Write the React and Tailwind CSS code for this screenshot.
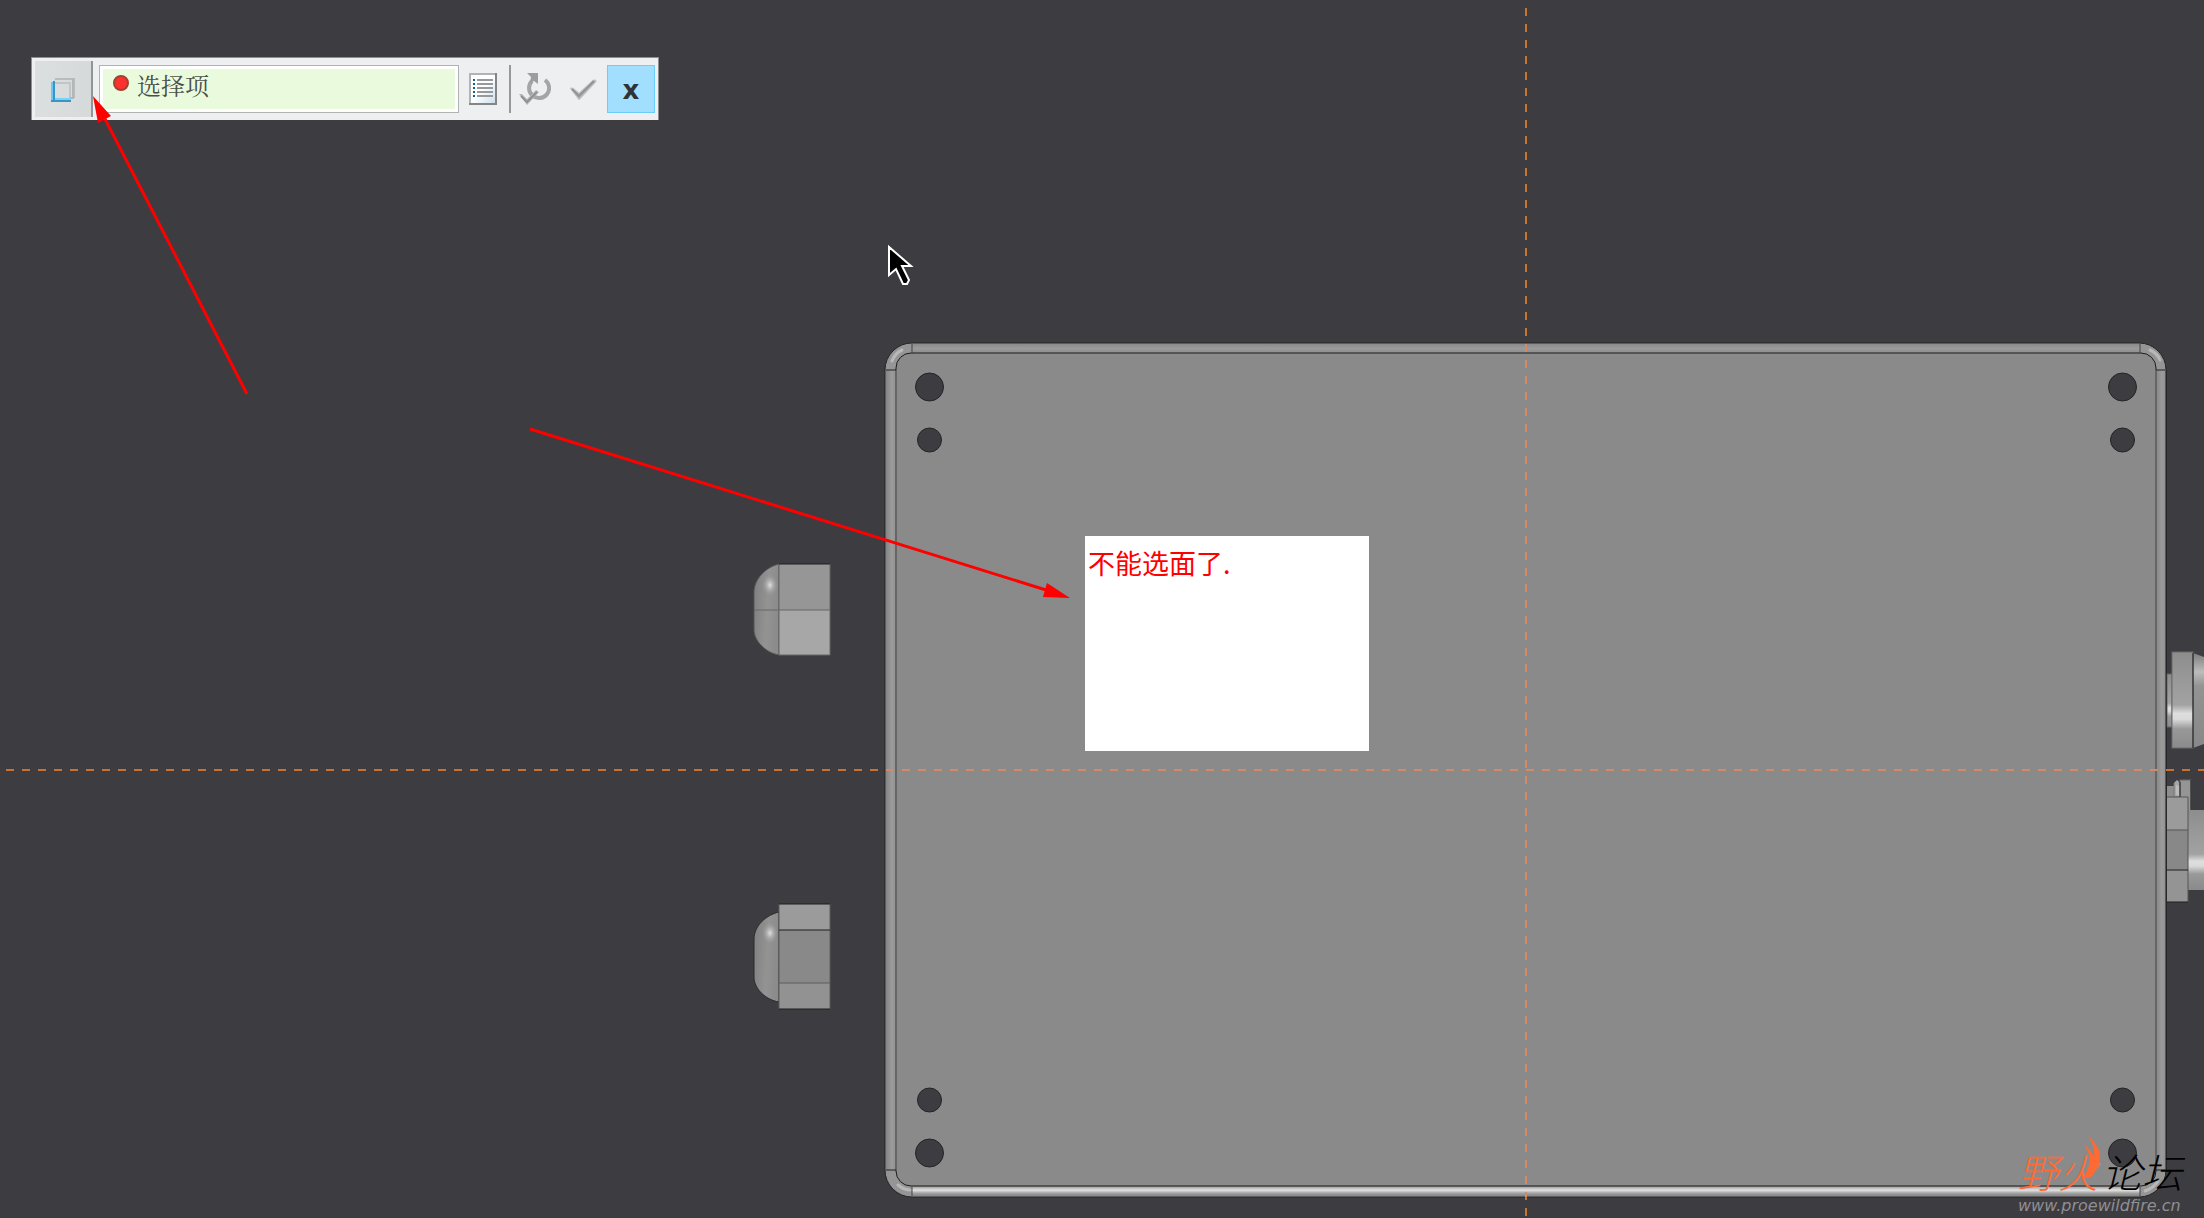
import React from 'react';

const HOLES = [
  { y: 387, r: 14 },
  { y: 440, r: 12 },
  { y: 1100, r: 12 },
  { y: 1153, r: 14 },
];

function CubeIcon() {
  return (
    <svg width="24" height="24" viewBox="0 0 24 24" fill="none" aria-hidden="true">
      <path d="M4 1H23V20" stroke="#b9bbbc" strokeWidth="2" />
      <path d="M4 5H19V20" stroke="#c2c4c5" strokeWidth="2" />
      <path d="M22 1V20H19" stroke="#b4b6b7" strokeWidth="2" />
      <path d="M1 4V22" stroke="#6fc6ee" strokeWidth="2" />
      <path d="M4 21H20" stroke="#7fd0f5" strokeWidth="2" />
      <path d="M3 3V23M0 23H20" stroke="#3596c8" strokeWidth="2" />
    </svg>
  );
}

function ListIcon() {
  return (
    <svg width="28" height="32" viewBox="0 0 28 32" aria-hidden="true">
      <defs>
        <linearGradient id="sheet" x1="0" y1="0" x2="1" y2="1">
          <stop offset="0.5" stopColor="#fff" />
          <stop offset="1" stopColor="#c9dcea" />
        </linearGradient>
      </defs>
      <path d="M1 1H27V31H1Z" fill="url(#sheet)" stroke="#b2b3b4" strokeWidth="2" />
      <path d="M27 0V31H0" fill="none" stroke="#838587" strokeWidth="2" />
      {[6, 10, 14, 18, 22].map((y) => (
        <g key={y}>
          <rect x="4" y={y} width="2" height="2" fill="#135f86" />
          <rect x="8" y={y} width="16" height="2" fill="#98999a" />
        </g>
      ))}
    </svg>
  );
}

function RepeatIcon() {
  return (
    <svg width="32" height="32" viewBox="0 0 32 32" fill="none" aria-hidden="true">
      <path d="M13 8A10 10 0 1 0 26 7" stroke="#a3a5a7" strokeWidth="4" />
      <path d="M8 0H19V11L15 8L11 10L12 4Z" fill="#9b9d9f" />
      <path d="M0 21L3 21L8 26L17 17L20 19L8 32Z" fill="#b4b6b8" />
      <path d="M2 23L8 29L18 19" stroke="#8f9193" strokeWidth="2" />
    </svg>
  );
}

function CheckIcon() {
  return (
    <svg width="28" height="22" viewBox="0 0 28 22" fill="none" aria-hidden="true">
      <path d="M1 9H4L10 14L24 1H27V3L10 21Z" fill="#b4b6b8" stroke="#cbcccd" />
      <path d="M3 10L10 17L25 2" stroke="#929496" strokeWidth="2" />
    </svg>
  );
}

function Toolbar() {
  return (
    <div
      role="toolbar"
      className="relative z-10 flex h-[63px] w-[628px] items-center border border-b-0 border-[#8d8e90] bg-[#eeeff1] pl-[3px] pr-[3px]"
    >
      <button
        type="button"
        aria-label="Surface"
        className="flex h-14 w-[58px] items-center justify-center border-r-2 border-[#929597] bg-gradient-to-r from-[#dbdfe0] to-[#d7dadb] pt-0.5"
      >
        <CubeIcon />
      </button>
      <div className="ml-1.5 flex h-12 w-[360px] shrink-0 border border-[#b1b2b4] bg-white p-[3px]">
        <div className="flex flex-1 items-start bg-[#eafbdd] pl-2.5">
          <span className="mt-1.5 size-4 shrink-0 rounded-full border-2 border-[#a3402f] bg-[#fd3030]" />
          <input
            aria-label="Collector"
            readOnly
            value="选择项"
            className="ml-2 h-8 min-w-0 flex-1 bg-transparent font-['Noto_Serif_CJK_SC','Noto_Sans_CJK_SC',serif] text-2xl leading-8 text-[#4a4f4a] outline-none"
          />
        </div>
      </div>
      <button type="button" aria-label="Details" className="ml-2.5">
        <ListIcon />
      </button>
      <span className="ml-3 h-12 w-0.5 bg-[#96989b]" />
      <button type="button" aria-label="Repeat" className="ml-2">
        <RepeatIcon />
      </button>
      <button type="button" aria-label="OK" className="ml-[18px] pt-0.5">
        <CheckIcon />
      </button>
      <button
        type="button"
        className="ml-auto size-12 border border-[#6cccfb] bg-[#a2dfff] pt-0.5 font-['DejaVu_Sans',sans-serif] text-[26px] leading-none font-bold text-[#303335]"
      >
        x
      </button>
    </div>
  );
}

function Plate() {
  return (
    <g>
      <rect x="885" y="343" width="1281" height="854" rx="27" fill="#959595" stroke="#252527" />
      <rect x="886" y="370" width="10" height="800" fill="url(#rimV)" />
      <rect x="2156" y="370" width="10" height="800" fill="url(#rimV)" />
      <rect x="912" y="344" width="1228" height="9" fill="url(#rimTop)" />
      <rect x="912" y="1187" width="1228" height="9" fill="url(#rimBottom)" />
      <rect x="896" y="353" width="1260" height="833" rx="15" fill="#8a8a8a" stroke="#1c1c1d" />
      <path d="M896 370V1170M2156 370V1170" stroke="#666" strokeWidth="2" />
      <path d="M912 344V353M2140 344V353M912 1187V1196M2140 1187V1196" stroke="#444" />
      <path d="M886 370H896M2156 370H2165M886 1170H896M2156 1170H2165" stroke="#222" />
      <g stroke="#d0d0d0" strokeWidth="3" strokeLinecap="round" fill="none" opacity="0.6">
        <path d="M892 361Q895 353 902 350" />
        <path d="M2150 350Q2157 353 2160 360" />
        <path d="M2145 1191Q2154 1188 2158 1181" />
        <path d="M898 1185Q904 1190 910 1190" />
      </g>
      {HOLES.map((hole) => (
        <g key={hole.y} fill="#3d3c41" stroke="#242426">
          <circle cx="929.5" cy={hole.y} r={hole.r} />
          <circle cx="2122.5" cy={hole.y} r={hole.r} />
        </g>
      ))}
    </g>
  );
}

function LeftNuts() {
  return (
    <g>
      <path d="M779 564C766 567 754 579 754 592V630C754 641 766 653 779 655Z" fill="url(#dome)" stroke="#555" />
      <ellipse cx="770" cy="585" rx="8" ry="11" fill="url(#shine)" />
      <rect x="779" y="564" width="51" height="46" fill="#969696" />
      <rect x="779" y="610" width="51" height="45" fill="#a7a7a7" />
      <path d="M754 610H830M779 564V655M830 564V655H779" stroke="#666" fill="none" />
      <path d="M779 564H830" stroke="#1f1f20" />

      <path d="M779 912C766 915 754 926 754 939V977C754 989 766 1000 779 1002Z" fill="url(#dome)" stroke="#2b2b2d" />
      <ellipse cx="770" cy="933" rx="8" ry="11" fill="url(#shine)" />
      <rect x="779" y="904" width="51" height="26" fill="#9b9b9b" />
      <rect x="779" y="930" width="51" height="53" fill="#898989" />
      <rect x="779" y="983" width="51" height="26" fill="#929292" />
      <path d="M779 904V1009M830 904V1009M779 983H830" stroke="#5d5d5d" />
      <path d="M779 904H830M779 930H830M779 1009H830" stroke="#1f1f20" />
    </g>
  );
}

function RightConnectors() {
  return (
    <g>
      <rect x="2167" y="674" width="5" height="53" fill="url(#steel)" stroke="#666" />
      <path d="M2193 653L2204 657V744L2193 748Z" fill="url(#steelCone)" />
      <rect x="2172" y="652" width="21" height="96" fill="url(#steel)" stroke="#6b6b6b" />
      <path d="M2193 653V748" stroke="#1b1b1c" />

      <rect x="2167" y="786" width="8" height="12" fill="#8e8e8e" />
      <path d="M2174 797V783L2177 780L2180 783V797Z" fill="#a5a5a5" stroke="#777" />
      <path d="M2177 785V795M2179 786V796" stroke="#d0d0d0" />
      <rect x="2180" y="780" width="11" height="32" fill="#959595" stroke="#6b6b6b" />
      <path d="M2180 782V797M2191 780V810" stroke="#242425" />
      <rect x="2188" y="810" width="16" height="80" fill="url(#steel)" />
      <rect x="2167" y="797" width="21" height="33" fill="#9b9b9b" />
      <rect x="2167" y="830" width="21" height="40" fill="#888" />
      <rect x="2167" y="870" width="21" height="32" fill="#949494" />
      <path d="M2167 797H2188V902M2167 830H2188" stroke="#555" fill="none" />
      <path d="M2167 870H2188M2167 902H2188M2166 370V1170" stroke="#1f1f20" />
    </g>
  );
}

function Scene() {
  return (
    <svg className="absolute inset-0 h-full w-full" aria-hidden="true">
      <defs>
        <linearGradient id="rimV">
          <stop offset="0" stopColor="#858585" />
          <stop offset="0.6" stopColor="#9c9c9c" />
          <stop offset="1" stopColor="#8f8f8f" />
        </linearGradient>
        <linearGradient id="rimTop" x2="0" y2="1">
          <stop offset="0" stopColor="#8b8b8b" />
          <stop offset="0.5" stopColor="#9b9b9b" />
          <stop offset="1" stopColor="#8d8d8d" />
        </linearGradient>
        <linearGradient id="rimBottom" x2="0" y2="1">
          <stop offset="0" stopColor="#a8a8a8" />
          <stop offset="0.35" stopColor="#e2e2e2" />
          <stop offset="0.7" stopColor="#a0a0a0" />
          <stop offset="1" stopColor="#858585" />
        </linearGradient>
        <linearGradient id="dome" x2="1" y2="0.2">
          <stop offset="0" stopColor="#7f7f7f" />
          <stop offset="0.6" stopColor="#939393" />
          <stop offset="1" stopColor="#8b8b8b" />
        </linearGradient>
        <radialGradient id="shine">
          <stop offset="0" stopColor="#e0e0e0" />
          <stop offset="1" stopColor="#999" stopOpacity="0" />
        </radialGradient>
        <linearGradient id="steel" x2="0" y2="1">
          <stop offset="0" stopColor="#8d8d8d" />
          <stop offset="0.3" stopColor="#999" />
          <stop offset="0.55" stopColor="#a2a2a2" />
          <stop offset="0.64" stopColor="#dedede" />
          <stop offset="0.7" stopColor="#dadada" />
          <stop offset="0.8" stopColor="#999" />
          <stop offset="1" stopColor="#8a8a8a" />
        </linearGradient>
        <linearGradient id="steelCone" x2="0" y2="1">
          <stop offset="0" stopColor="#7d7d7d" />
          <stop offset="0.2" stopColor="#bcbcbc" />
          <stop offset="0.35" stopColor="#939393" />
          <stop offset="1" stopColor="#888" />
        </linearGradient>
        <clipPath id="plateClip">
          <rect x="885" y="343" width="1281" height="854" rx="27" />
        </clipPath>
      </defs>

      <Plate />
      <LeftNuts />
      <RightConnectors />

      {/* datum axes, paler where they cross the part */}
      <g strokeWidth="2" strokeDasharray="8 8">
        <path d="M6 770H2204M1526 8V1218" stroke="#c8732f" />
        <path d="M6 770H2204M1526 8V1218" stroke="#d28b64" clipPath="url(#plateClip)" />
      </g>
    </svg>
  );
}

function Annotations() {
  return (
    <svg className="pointer-events-none absolute inset-0 z-20 h-full w-full" aria-hidden="true">
      <g stroke="#f00" strokeWidth="3" fill="#f00">
        <path d="M247 394L105 119M530 429L1046 590" />
        <path d="M93 96L111 116L98 123ZM1070 598L1047 583L1043 597Z" stroke="none" />
      </g>
      <path
        d="M889 247V275L896 269L903 284H907L909 280L902 266H911Z"
        fill="#000"
        stroke="#fff"
        strokeWidth="2"
      />
    </svg>
  );
}

function Watermark() {
  return (
    <div className="relative z-10 mt-auto mr-[22px] self-end">
      <svg className="absolute top-1 left-16 h-11 w-6" viewBox="0 0 24 44" aria-hidden="true">
        <path
          d="M6 0C18 10 22 22 14 34L10 40C7 42 4 43 1 41C9 30 11 20 1 8C7 12 11 17 12 22C13 14 11 7 6 0Z"
          fill="#ff6a33"
        />
      </svg>
      <p className="flex gap-1 pt-3.5 font-['Noto_Sans_CJK_SC',sans-serif] text-[40px] leading-[50px] font-light italic">
        <span className="text-[#ff6a33]">野火</span>
        <span className="text-black">论坛</span>
      </p>
      <a
        href="#forum"
        className="block pb-0.5 font-['DejaVu_Sans',sans-serif] text-base leading-5 text-[#8f8f92] italic"
      >
        www.proewildfire.cn
      </a>
    </div>
  );
}

export default function App() {
  return (
    <main className="relative flex min-h-screen flex-col overflow-hidden bg-[#3d3c41] pt-[57px] pl-[31px]">
      <Scene />
      <Toolbar />
      <div className="absolute top-[536px] left-[1085px] z-10 h-[215px] w-[284px] bg-white px-[3px] pt-[7px] font-['Noto_Sans_CJK_SC',sans-serif] text-[27px] leading-10 text-[#f00]">
        不能选面了.
      </div>
      <Watermark />
      <Annotations />
    </main>
  );
}
